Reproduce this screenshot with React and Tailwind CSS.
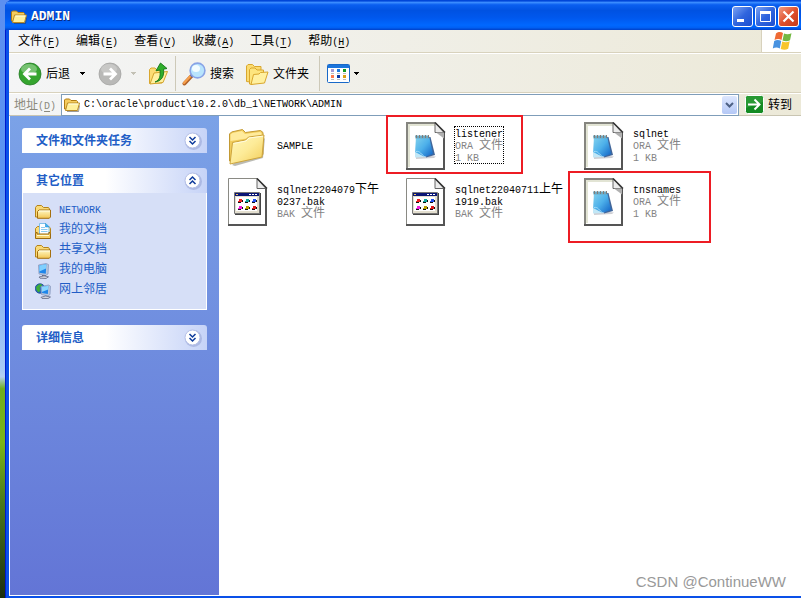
import { useState } from 'react';
import clsx from 'clsx';

const MENUS = [
  { label: '文件', hotkey: 'F' },
  { label: '编辑', hotkey: 'E' },
  { label: '查看', hotkey: 'V' },
  { label: '收藏', hotkey: 'A' },
  { label: '工具', hotkey: 'T' },
  { label: '帮助', hotkey: 'H' },
];

const PLACES = [
  { label: 'NETWORK', Icon: SmallFolder },
  { label: '我的文档', Icon: SmallDocuments },
  { label: '共享文档', Icon: SmallFolder },
  { label: '我的电脑', Icon: SmallComputer },
  { label: '网上邻居', Icon: SmallNetwork },
];

const FILES = [
  { name: 'SAMPLE', Icon: LargeFolder },
  { name: 'listener', type: 'ORA 文件', size: '1 KB', Icon: OraFile, focused: true, mark: '-left-[11px] -top-[3px] w-[137px] h-[59px]' },
  { name: 'sqlnet', type: 'ORA 文件', size: '1 KB', Icon: OraFile },
  { name: 'sqlnet2204079下午0237.bak', type: 'BAK 文件', Icon: BakFile },
  { name: 'sqlnet22040711上午1919.bak', type: 'BAK 文件', Icon: BakFile },
  { name: 'tnsnames', type: 'ORA 文件', size: '1 KB', Icon: OraFile, mark: '-left-[7px] -top-[3px] w-[143px] h-[72px]' },
];

// Latin runs are half as wide as a Chinese character, so they get the mono face
function Mixed({ text }) {
  return text.split(/([\x20-\x7e]+)/).filter(Boolean).map((part, i) =>
    /^[\x20-\x7e]/.test(part)
      ? <span key={i} className="font-['Liberation_Mono',monospace] text-[10px] leading-[0]">{part}</span>
      : part
  );
}

function Hotkey({ letter }) {
  return (
    <span className="font-['Liberation_Mono',monospace] text-[10px] leading-[0]">
      (<span className="underline underline-offset-2">{letter}</span>)
    </span>
  );
}

/* ---------- icons ---------- */

function TitleFolder() {
  return (
    <svg width="16" height="16" viewBox="0 0 16 16">
      <path d="M3 14.500h11.500l1-6" fill="none" stroke="#3a3a3a" opacity=".5" />
      <path d="M.5 12V3l1-1h4l1.500 1.500h5.500l1 1V12z" fill="#f6cd5e" stroke="#b07c14" />
      <path d="M1.500 13.500l2-7.500h12l-2 7.500z" fill="#fff09c" stroke="#b98a24" />
      <path d="M4.500 7h10" stroke="#fffde8" />
    </svg>
  );
}

function SmallFolder() {
  return (
    <svg width="16" height="16" viewBox="0 0 16 16">
      <path d="M.5 14V4.500l1.500-2h4.500l2 2h5l1 1.500v8z" fill="#f9da78" stroke="#b58318" />
      <path d="M2.500 15.300V8.500l1.500-1.500h11.500v7l-1.200 1.300z" fill="url(#sf)" stroke="#a5700f" />
      <path d="M4 8h11" stroke="#fffce4" />
      <defs>
        <linearGradient id="sf" x1="0" y1="0" x2="0" y2="1">
          <stop stopColor="#fff9c4" /><stop offset="1" stopColor="#f3c653" />
        </linearGradient>
      </defs>
    </svg>
  );
}

function SmallDocuments() {
  return (
    <svg width="16" height="16" viewBox="0 0 16 16">
      <path d="M.5 14V5.500l2-2H14l1.500 2V14z" fill="#f9da78" stroke="#b58318" />
      <path d="M4.500.500h6.500l3 3v8.500h-9.500z" fill="#fff" stroke="#7fc0ea" />
      <path d="M10.500.500v3.500H14z" fill="#39b4f5" stroke="#2a8fd5" strokeWidth=".6" />
      <path d="M6 4.500h4M6 6.500h6.500M6 8.500h6.500" stroke="#8ccbf2" />
      <path d="M.5 15.500v-5L2 9v2h12V9l1.500 1.500v5z" fill="#f6d068" stroke="#9a6a10" />
      <path d="M2 12.500h12" stroke="#fffbd0" />
    </svg>
  );
}

function SmallComputer() {
  return (
    <svg width="16" height="16" viewBox="0 0 16 16">
      <path d="M3.500 2l7.500-1.500 2.500 1-.5 9.500-2.500 1.500-6.500-1.500z" fill="#b9c6dc" stroke="#8a9ac0" strokeWidth=".8" />
      <path d="M4.300 2.500l7-1.300-.5 9.600-6.500-1z" fill="#1f86ea" />
      <path d="M4.300 2.500l7-1.300-.2 4.300-6.800 3z" fill="#7fd0ff" />
      <path d="M7 12l4 .5v1.500l-4-.5z" fill="#5b6380" />
      <path d="M4 14l5-1.200 4.500 1L11 15.500l-6-.3z" fill="#d3d5de" stroke="#5f6885" strokeWidth=".8" />
    </svg>
  );
}

function SmallNetwork() {
  return (
    <svg width="16" height="16" viewBox="0 0 16 16">
      <circle cx="5" cy="5.500" r="4.800" fill="#1f63c4" stroke="#153f8e" strokeWidth=".7" />
      <path d="M1 4l2.500-2.500L6.500 1 7 3 4.500 4.500l1 3-2 2L1.500 7z" fill="#3fae36" />
      <path d="M6 3.500l7.500-1.500 2 1.200-.5 8.300-2 1.500-6.500-1.500z" fill="#b9c6dc" stroke="#8a9ac0" strokeWidth=".8" />
      <path d="M6.800 4l6.500-1.200-.4 8.200-6-1z" fill="#1f86ea" />
      <path d="M6.800 4l6.500-1.200-.2 3.700L6.900 9z" fill="#8ad6ff" />
      <path d="M6 14.300l4.500-1.300 5 1-2.500 1.600-6-.2z" fill="#d3d5de" stroke="#5f6885" strokeWidth=".8" />
    </svg>
  );
}

function LargeFolder() {
  return (
    <svg width="40" height="48" viewBox="0 0 40 48">
      <path d="M4 43l3 1 28-8 2-20z" fill="#77776a" opacity=".5" />
      <path d="M1.500 39V12l2-2 11-2.500 3 3 15-2 2.500 2v22z" fill="#f2cd5c" stroke="#c39a34" />
      <path d="M2.500 19V12.500l2-1.500 9.500-2 3 3 15-2 1.500 1.300V14z" fill="#ffeb9c" />
      <path d="M2 42l2.500-21.500 13-2.500 3-3 15.500-2-2 22z" fill="url(#lf)" stroke="#cda43c" />
      <path d="M5.500 21.500l12.500-2.500 3-3 14-1.800" fill="none" stroke="#fffbe0" />
      <defs>
        <linearGradient id="lf" x1="0" y1="0" x2="1" y2="1">
          <stop stopColor="#fff7bd" /><stop offset=".5" stopColor="#fdeb98" /><stop offset="1" stopColor="#f3cc57" />
        </linearGradient>
      </defs>
    </svg>
  );
}

function OraFile() {
  return (
    <svg width="40" height="48" viewBox="0 0 40 48">
      <path d="M0 0h29l10 9v39H0z" fill="#fff" />
      <path d="M1 46V1H29" fill="none" stroke="#85857f" strokeWidth="2" />
      <path d="M3 45V3h26" fill="none" stroke="#e2e4d4" strokeWidth="2" />
      <path d="M38 10v37M0 47h39" stroke="#555" strokeWidth="2" />
      <path d="M29 .5v10h9z" fill="#ececec" stroke="#666" />
      <path d="M30 10.500l8 0v6z" fill="#b0b0b0" />
      <path d="M29 .5l10 10" stroke="#333" strokeWidth="1.500" />
      <path d="M10 35l15-1 5 .5-2 1.500-18 1z" fill="#b9b9c0" opacity=".7" />
      <path d="M22 15h2.500l4.500 18-9 2.500z" fill="#41669a" />
      <path d="M10 14h13l4 18-9 3-9-3z" fill="url(#np)" />
      <path d="M9 13.500h14v3H9.500z" fill="#6aa9c4" />
      <path d="M10.500 13v3M13.500 13v3M16.500 13v3M19.500 13v3M22.500 13v3" stroke="#837d78" />
      <path d="M9 30l10 5-10 .5z" fill="#c2e7f6" />
      <path d="M10 29.500c4-1 5 3 9 5.500" fill="none" stroke="#a5dcf8" />
      <defs>
        <linearGradient id="np" x1="0" y1="0" x2="1" y2="1">
          <stop stopColor="#86d4ee" /><stop offset=".5" stopColor="#4db0ea" /><stop offset="1" stopColor="#0f60c4" />
        </linearGradient>
      </defs>
    </svg>
  );
}

function BakFile() {
  return (
    <svg width="40" height="48" viewBox="0 0 40 48">
      <path d="M.5 47V.500H29l9.500 9.500v37z" fill="#fff" stroke="#8a8a84" />
      <path d="M0 47h39M38 10v37" stroke="#555" strokeWidth="2" />
      <path d="M29 .5v10h9z" fill="#ececec" stroke="#666" />
      <path d="M29 .5l10 10" stroke="#333" strokeWidth="1.500" />
      <path d="M7 15h26v22H7z" fill="#444" />
      <path d="M6.500 14.500h25v21h-25z" fill="#e4dfcf" stroke="#777" />
      <path d="M7 15h24v3H7z" fill="#0a1676" />
      <path d="M8 16h2v1H8z" fill="#f6c65b" />
      <path d="M21 16h2v1h-2zM24 16h2v1h-2zM27 16h2v1h-2z" fill="#fff" />
      <path d="M8 19h21v14H8z" fill="#fff" />
      {[['#f02020', 11, 21], ['#10a8a0', 18, 21], ['#2050f0', 25, 21], ['#f020e0', 11, 28], ['#b8a000', 18, 28], ['#e01818', 25, 28]].map(([c, x, y]) => (
        <g key={`${x}-${y}`}>
          <path d={`M${x} ${y}h3v3h-3z`} fill={c} />
          <path d={`M${x - 1} ${y + 2}h2v1h-2z`} fill={c} />
          <path d={`M${x - 1} ${y + 3}h3v1h-3zM${x + 3} ${y + 1}h1v2h-1z`} fill="#111" />
        </g>
      ))}
    </svg>
  );
}

function NavCircle({ forward }) {
  return (
    <svg width="24" height="24" viewBox="0 0 24 24">
      <circle cx="12" cy="12" r="11" fill={forward ? '#b9b9b7' : '#35a52f'} stroke={forward ? '#a5a5a3' : '#287c29'} strokeWidth=".8" />
      <ellipse cx="11" cy="7" rx="8" ry="5" fill="#fff" opacity={forward ? '.22' : '.32'} />
      <path
        d={forward ? 'M5.500 12H17M12 6.500l5.500 5.500-5.500 5.500' : 'M18.500 12H7M12 6.500L6.500 12l5.500 5.500'}
        fill="none" stroke="#fff" strokeWidth="2.800"
      />
    </svg>
  );
}

function UpFolder() {
  return (
    <svg width="24" height="24" viewBox="0 0 24 24">
      <path d="M3.500 21.500V7.500L5 6h4l2 2h5v13z" fill="#fbdc74" stroke="#d9a72e" />
      <path d="M4 22l4-11 13.500-1.500-4.500 11z" fill="#fff0a0" stroke="#d3a42f" />
      <path d="M9 20c5-2 5.500-6 5-12l-4 .8L14.500 1l6.500 5.500-3.500.7c1 7-2 12-8.500 12.800z" fill="#2fae2b" stroke="#14751a" strokeWidth=".9" />
    </svg>
  );
}

function SearchIcon() {
  return (
    <svg width="24" height="24" viewBox="0 0 24 24">
      <path d="M9.500 14l-7 7.500" stroke="#b0622a" strokeWidth="4" strokeLinecap="round" />
      <path d="M9 13.500l-7 7.500" stroke="#f7a04c" strokeWidth="2.200" strokeLinecap="round" />
      <path d="M11 12.500l-2 2" stroke="#5a6cae" strokeWidth="3" />
      <circle cx="15.500" cy="8.500" r="7.400" fill="#b8e4fd" stroke="#88a3e6" strokeWidth="1.600" />
      <ellipse cx="14" cy="6.500" rx="4" ry="3.500" fill="#f2fcff" />
    </svg>
  );
}

function FoldersIcon() {
  return (
    <svg width="24" height="24" viewBox="0 0 24 24">
      <path d="M1.500 19.500V4L3 2.500h4.500l2 2H16v4L5 20z" fill="#fbdc70" stroke="#d9a72e" />
      <path d="M4.500 22V7.500L6 6h4l2 2h6.500v6L7 22.500z" fill="#fde57e" stroke="#d9a72e" />
      <path d="M6 22.500l2.500-10 5.500-.5 1.500-1.500 7.500-.5-3.500 11z" fill="#fff0a0" stroke="#d9a72e" />
    </svg>
  );
}

function ViewsIcon() {
  return (
    <svg width="24" height="20" viewBox="0 0 24 20">
      <rect x=".5" y=".5" width="22" height="18" rx="1" fill="#fff" stroke="#1869c8" />
      <path d="M1 1h21v3H1z" fill="#1b75dc" />
      {[['#a49bd5', 4, 5], ['#1d7be0', 10, 5], ['#119a22', 16, 5], ['#ff7b4c', 4, 11], ['#0c3ba4', 10, 11], ['#daa014', 16, 11]].map(([c, x, y]) => (
        <g key={`${x}-${y}`}>
          <path d={`M${x} ${y}h3v3h-3z`} fill={c} />
          <path d={`M${x} ${y + 4.500}h3`} stroke="#bbb" />
        </g>
      ))}
    </svg>
  );
}

function DropArrow({ disabled }) {
  return (
    <svg width="6" height="3" viewBox="0 0 6 3" shapeRendering="crispEdges">
      <path d="M0 0h6L3 3z" fill={disabled ? '#c3c1b5' : '#000'} />
    </svg>
  );
}

function WindowsFlag() {
  return (
    <svg width="20" height="20" viewBox="0 0 20 20">
      <path d="M4 2.500c2.500-2 5-1.800 7-.5L9.500 9C7.500 7.800 5 7.600 2.500 9z" fill="#ee6a35" />
      <path d="M12 2.500c2.500 1.200 5 1 7.500-.3L18 9.200c-2.500 1.300-5 1.200-7.500.2z" fill="#73b843" />
      <path d="M2.200 10c2.300-1.500 5-1.200 7-.1L7.800 17.500c-2.300-1.300-4.800-1.200-7 .1z" fill="#4892e0" />
      <path d="M10.200 10.500c2.500 1.200 5 1 7.500-.2l-1.500 7.500c-2.500 1.300-5 1.200-7.500.2z" fill="#f8c52c" />
    </svg>
  );
}

function PanelChevron({ open }) {
  return (
    <svg width="20" height="20" viewBox="0 0 20 20">
      <circle cx="10.500" cy="10.500" r="8.500" fill="#8d9bd0" opacity=".5" />
      <circle cx="9.500" cy="9.500" r="7.500" fill="#fff" stroke="#b4bfe6" />
      <path
        d={open ? 'M6.500 9l3-3 3 3M6.500 13l3-3 3 3' : 'M6.500 6l3 3 3-3M6.500 10l3 3 3-3'}
        fill="none" stroke="#0f3c9c" strokeWidth="1.500"
      />
    </svg>
  );
}

/* ---------- window parts ---------- */

function CaptionButton({ label, danger, children }) {
  return (
    <button
      aria-label={label}
      className={clsx(
        'flex size-[21px] items-center justify-center rounded-[3px] border border-white',
        danger
          ? 'bg-linear-to-br from-[#f09a80] via-[#e0502c] to-[#c53a18]'
          : 'bg-linear-to-br from-[#7da2f2] via-[#3065de] to-[#1b4ed0]'
      )}
    >
      <svg width="19" height="19" viewBox="0 0 19 19" fill="none" stroke="#fff">{children}</svg>
    </button>
  );
}

function TitleBar() {
  return (
    <header className="flex h-[30px] shrink-0 items-center rounded-tl-[7px] bg-[linear-gradient(180deg,#0046d8_0,#0046d8_3%,#3b8dff_8%,#0a5ff0_16%,#0052e2_35%,#0058ee_60%,#0068ff_84%,#0060f4_92%,#0040c8_100%)] pl-[6px] pr-[2px] pt-[3px]">
      <TitleFolder />
      <h1 className="ml-1 flex-1 font-['Liberation_Mono',monospace] text-[13px] font-bold leading-4 text-white [text-shadow:1px_1px_#0a2a80]">ADMIN</h1>
      <div className="flex gap-[2px]">
        <CaptionButton label="最小化"><path d="M4 13.500h7" strokeWidth="3" /></CaptionButton>
        <CaptionButton label="最大化"><path d="M4.500 5v9.500h10V5" /><path d="M4 5.500h11" strokeWidth="3" /></CaptionButton>
        <CaptionButton label="关闭" danger><path d="M4.500 4.500l10 10M14.500 4.500l-10 10" strokeWidth="2.200" /></CaptionButton>
      </div>
    </header>
  );
}

function MenuBar() {
  return (
    <div className="flex h-6 shrink-0 border-b border-white">
      <nav className="flex flex-1 items-center gap-4 border-b border-r border-[#d8d2bd] pl-[9px]">
        {MENUS.map(m => (
          <button key={m.hotkey} className="whitespace-nowrap">
            {m.label}<Hotkey letter={m.hotkey} />
          </button>
        ))}
      </nav>
      <div className="flex w-[39px] items-center justify-center border-b border-[#d8d2bd] bg-white">
        <WindowsFlag />
      </div>
    </div>
  );
}

function Separator() {
  return <div className="h-[35px] w-px bg-[#cdc9b8]" />;
}

function Toolbar() {
  return (
    <div className="flex h-10 shrink-0 items-center whitespace-nowrap border-b border-white pl-[9px] shadow-[inset_0_-1px_#d8d2bd]">
      <button className="flex items-center gap-1"><NavCircle />后退</button>
      <button aria-label="后退列表" className="ml-[9px]"><DropArrow /></button>
      <button aria-label="前进" className="ml-[13px]" disabled><NavCircle forward /></button>
      <button aria-label="前进列表" className="ml-2" disabled><DropArrow disabled /></button>
      <button aria-label="向上" className="ml-[10px] mr-[5px]"><UpFolder /></button>
      <Separator />
      <button className="ml-[6px] flex items-center gap-1"><SearchIcon />搜索</button>
      <button className="ml-[11px] mr-[10px] flex items-center gap-1"><FoldersIcon />文件夹</button>
      <Separator />
      <button aria-label="查看方式" className="ml-[7px] flex items-center gap-[2px]"><ViewsIcon /><DropArrow /></button>
    </div>
  );
}

function AddressBar() {
  const [path, setPath] = useState('C:\\oracle\\product\\10.2.0\\db_1\\NETWORK\\ADMIN');

  return (
    <form className="flex h-[22px] shrink-0 items-center border-b border-[#c9c5b2]" onSubmit={e => e.preventDefault()}>
      <label htmlFor="address" className="w-[52px] shrink-0 whitespace-nowrap pl-[5px] text-[#8b897c]">
        地址<Hotkey letter="D" />
      </label>
      <div className="flex h-[22px] flex-1 items-center border border-[#7f9db9] bg-white pl-[2px] pr-px">
        <TitleFolder />
        <input
          id="address"
          value={path}
          onChange={e => setPath(e.target.value)}
          className="ml-1 min-w-0 flex-1 font-['Liberation_Mono',monospace] text-[10px] leading-4 outline-none"
        />
        <button type="button" aria-label="地址列表" className="flex h-[18px] w-[15px] items-center justify-center rounded-[2px] bg-linear-to-b from-[#dde7fe] to-[#b4c8f6]">
          <svg width="9" height="6" viewBox="0 0 9 6" fill="none"><path d="M1 1l3.500 3.500L8 1" stroke="#4d6185" strokeWidth="2" /></svg>
        </button>
      </div>
      <button className="ml-[6px] mr-[9px] flex items-center gap-1 whitespace-nowrap">
        <svg width="19" height="19" viewBox="0 0 19 19">
          <rect x=".5" y=".5" width="18" height="18" rx="2" fill="#138a22" stroke="#fff" />
          <path d="M1 1h17v6L1 13z" fill="#4fb557" opacity=".35" />
          <path d="M3 9.500h11M9.500 4.500l5 5-5 5" fill="none" stroke="#fff" strokeWidth="2" />
        </svg>
        转到
      </button>
    </form>
  );
}

function Panel({ title, open, children }) {
  return (
    <section>
      <button
        aria-expanded={!!open}
        className="flex h-[25px] w-full items-center justify-between rounded-t-[3px] bg-linear-to-r from-white from-45% to-[#c6d3f7] pl-[14px] pr-1 font-bold text-[#215dc6]"
      >
        {title}
        <PanelChevron open={open} />
      </button>
      {open && <div className="border border-t-0 border-white bg-[#d6dff7]">{children}</div>}
    </section>
  );
}

function Sidebar() {
  return (
    <aside className="flex w-[209px] shrink-0 flex-col gap-[15px] bg-linear-to-b from-[#7ba2e7] to-[#6375d6] p-3">
      <Panel title="文件和文件夹任务" />
      <Panel title="其它位置" open>
        <ul className="px-3 pb-[10px] pt-[6px]">
          {PLACES.map(({ label, Icon }) => (
            <li key={label}>
              <a href="#" className="flex h-5 items-end gap-2 leading-5 text-[#215dc6]">
                <Icon />
                <span><Mixed text={label} /></span>
              </a>
            </li>
          ))}
        </ul>
      </Panel>
      <Panel title="详细信息" />
    </aside>
  );
}

function FileTile({ file }) {
  const { name, type, size, Icon, focused, mark } = file;

  return (
    <li className="relative flex h-14 w-[178px] items-center pl-[9px]">
      <button className="flex items-center gap-[9px] text-left">
        <Icon />
        <span className={clsx('mb-[3px] block max-w-28 leading-3', focused && 'outline-1 outline-dotted outline-black')}>
          <span className="block"><Mixed text={name} /></span>
          {type && <span className="block text-[#848484]"><Mixed text={type} /></span>}
          {size && <span className="block text-[#848484]"><Mixed text={size} /></span>}
        </span>
      </button>
      {mark && <span className={clsx('pointer-events-none absolute z-10 border-2 border-[#ed1c24]', mark)} />}
    </li>
  );
}

export default function App() {
  return (
    <div className="flex h-screen bg-[linear-gradient(180deg,#5c8ff0_0,#5c94f2_30%,#a9cbf5_62%,#b5d0f0_63%,#6fae1e_65%,#7cb518_74%,#4c7a1c_84%,#1d2e10_100%)] pl-[5px] font-['Liberation_Sans','Noto_Sans_CJK_SC',sans-serif] text-xs text-black">
      <div className="relative flex min-w-0 flex-1 flex-col rounded-tl-[8px] bg-[#0a50e8] pb-[2px] shadow-[inset_1px_0_#0019cf]">
        <TitleBar />
        <div className="ml-1 flex min-h-0 flex-1 flex-col border-b border-white">
          <div className="flex shrink-0 flex-col bg-linear-to-r from-[#f4f5f6] to-[#ece9d8]">
            <MenuBar />
            <Toolbar />
            <AddressBar />
          </div>
          <main className="flex min-h-0 flex-1 border-l border-white bg-white">
            <Sidebar />
            <ul className="flex flex-1 flex-wrap content-start pt-[2px]">
              {FILES.map(file => <FileTile key={file.name} file={file} />)}
            </ul>
          </main>
        </div>
        <p className="absolute bottom-[6px] right-[15px] text-[15px] leading-5 text-[#999]">CSDN @ContinueWW</p>
      </div>
    </div>
  );
}
